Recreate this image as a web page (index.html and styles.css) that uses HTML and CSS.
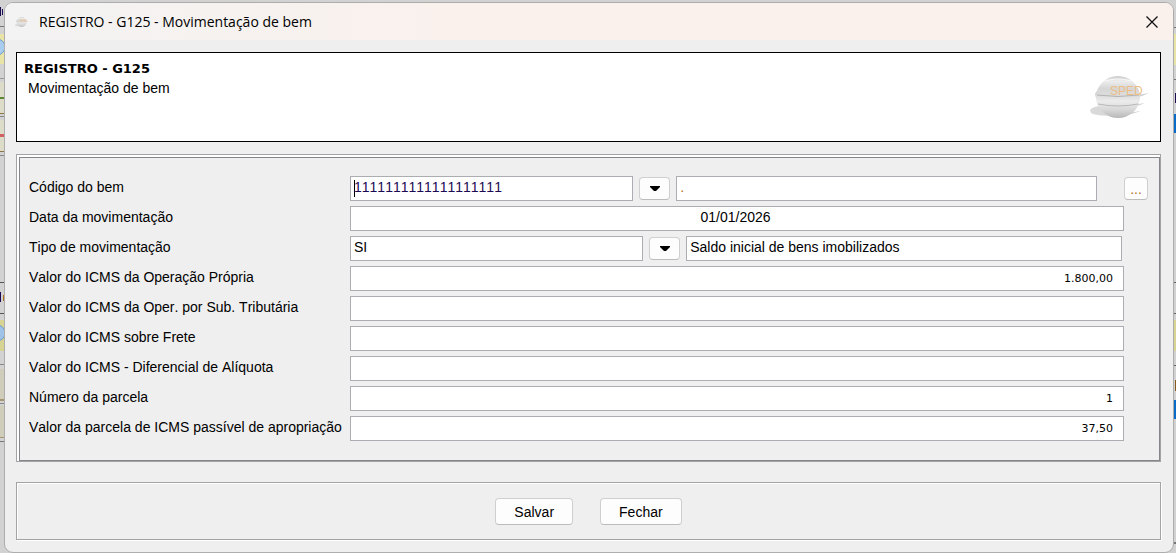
FILE: index.html
```html
<!DOCTYPE html>
<html lang="pt-BR">
<head>
    <meta charset="UTF-8">
    <meta name="viewport" content="width=device-width, initial-scale=1.0">
    <title>REGISTRO - G125 - Movimentação de bem</title>
    <link rel="stylesheet" href="styles.css">
</head>
<body>
    <!-- janela de trás, só aparece nas bordas -->
    <svg class="fundo fundo-esquerdo" width="12" height="553" aria-hidden="true">
        <rect y="26" width="12" height="1" fill="#777"/>
        <rect y="7" width="1" height="9" fill="#1c0b52"/>
        <rect x="2" y="9" width="1" height="6" fill="#1c0b52"/>
        <rect y="34" width="12" height="30" fill="#e8e4a6"/>
        <circle cx="-3" cy="47" r="8" fill="#a9cdf0" stroke="#6f9bc8"/>
        <rect y="78" width="12" height="1" fill="#999"/>
        <rect y="82" width="12" height="31" fill="#dcdcc9"/>
        <rect y="97" width="12" height="2" fill="#5d8734"/>
        <rect y="113" width="12" height="1" fill="#8b7546"/>
        <rect y="116" width="12" height="1" fill="#888"/>
        <rect y="120" width="12" height="31" fill="#dcdcc9"/>
        <rect y="134" width="12" height="3" fill="#d16060"/>
        <rect y="151" width="12" height="1" fill="#8b7546"/>
        <rect y="155" width="12" height="1" fill="#888"/>
        <rect y="282" width="12" height="1" fill="#555"/>
        <rect y="292" width="1" height="10" fill="#1c0b52"/>
        <rect x="3" y="295" width="1" height="6" fill="#b0721c"/>
        <rect y="313" width="12" height="1" fill="#555"/>
        <rect y="320" width="12" height="31" fill="#d6d393"/>
        <circle cx="-3" cy="333" r="8" fill="#9fc3e8" stroke="#6f9bc8"/>
        <rect y="364" width="12" height="1" fill="#888"/>
        <rect y="369" width="12" height="31" fill="#cfccb9"/>
        <rect y="399" width="12" height="2" fill="#a39671"/>
        <rect y="403" width="12" height="1" fill="#888"/>
        <rect y="406" width="12" height="31" fill="#cfccb9"/>
        <rect y="437" width="12" height="1" fill="#a39671"/>
        <rect y="441" width="12" height="1" fill="#777"/>
    </svg>
    <svg class="fundo fundo-direito" width="12" height="553" aria-hidden="true">
        <rect y="27" width="12" height="1" fill="#777"/>
        <rect y="34" width="12" height="31" fill="#e8e4a6"/>
        <rect y="79" width="12" height="1" fill="#777"/>
        <rect x="9" y="97" width="1" height="6" fill="#b0721c"/>
        <rect x="11" y="93" width="1" height="10" fill="#1c0b52"/>
        <rect y="114" width="12" height="19" fill="#0a6ac8"/>
        <rect y="282" width="12" height="1" fill="#666"/>
        <rect y="313" width="12" height="1" fill="#666"/>
        <rect y="320" width="12" height="31" fill="#d6d393"/>
        <rect y="365" width="12" height="1" fill="#666"/>
        <rect x="11" y="380" width="1" height="11" fill="#8a5a1c"/>
        <rect y="400" width="12" height="19" fill="#0a6ac8"/>
        <rect y="542" width="12" height="2" fill="#777"/>
    </svg>

    <div class="janela">
        <header class="barra-titulo">
            <svg class="icone-janela" width="14" height="14" viewBox="0 0 60 48" aria-hidden="true">
                <use href="#sped"/>
            </svg>
            <span class="titulo-janela">REGISTRO - G125 - Movimentação de bem</span>
            <button type="button" class="btn-x" aria-label="Fechar janela">
                <svg width="12" height="12" viewBox="0 0 12 12" aria-hidden="true">
                    <path d="M0.5 0.5L11.5 11.5M11.5 0.5L0.5 11.5" stroke="#111" stroke-width="1.3" fill="none"/>
                </svg>
            </button>
        </header>

        <main class="conteudo">
            <section class="cabecalho">
                <div>
                    <h1>REGISTRO - G125</h1>
                    <p>Movimentação de bem</p>
                </div>
                <svg class="logo" width="60" height="48" viewBox="0 0 60 48" aria-hidden="true">
                    <defs>
                        <linearGradient id="esfera" x1="0" y1="0" x2="0" y2="1">
                            <stop offset="0" stop-color="#c9c9c9"/>
                            <stop offset="0.12" stop-color="#ededed"/>
                            <stop offset="0.3" stop-color="#d6d6d6"/>
                            <stop offset="0.48" stop-color="#dedede"/>
                            <stop offset="0.6" stop-color="#ececec"/>
                            <stop offset="0.8" stop-color="#d8d8d8"/>
                            <stop offset="1" stop-color="#b8b8b8"/>
                        </linearGradient>
                    </defs>
                    <g id="sped">
                        <path d="M0 37Q3 33 12 33L10 29L20 30L24 42Q10 44 1 40Z" fill="#d9d9d9"/>
                        <path d="M5 21Q8 14 17 14L16 28L6 25Z" fill="#cecece"/>
                        <path d="M42 23L59 20L52 23L44 25ZM42 32L55 30L50 32L43 34ZM36 40L51 38L38 42Z" fill="#d0d0d0"/>
                        <ellipse cx="28" cy="24" rx="22" ry="21" fill="url(#esfera)"/>
                        <path d="M15 8Q28 4 41 8" stroke="#f8f8f8" fill="none"/>
                        <path d="M7 22Q28 25 49 22" stroke="#b3b3b3" fill="none"/>
                        <path d="M8 31Q28 35 48 31" stroke="#b9b9b9" fill="none"/>
                        <text class="logo-texto" x="20" y="22">SPED</text>
                    </g>
                </svg>
            </section>

            <form id="form-bem" class="painel">
                <div class="painel-interno">
                    <div class="linha">
                        <label for="codigo">Código do bem</label>
                        <div class="campos campos-codigo">
                            <input type="text" id="codigo" class="com-cursor" value="1111111111111111111">
                            <button type="button" class="btn btn-seta" aria-label="Escolher bem">
                                <svg width="10" height="5" viewBox="0 0 10 5" aria-hidden="true"><path d="M0 0H10V1L6 5H4L0 1Z" fill="#000"/></svg>
                            </button>
                            <input type="text" class="descricao ponto" value="." aria-label="Descrição do bem" readonly>
                        </div>
                        <button type="button" class="btn btn-mais" aria-label="Mais">...</button>
                    </div>
                    <div class="linha">
                        <label for="data">Data da movimentação</label>
                        <div class="campos"><input type="text" id="data" class="centro" value="01/01/2026"></div>
                    </div>
                    <div class="linha">
                        <label for="tipo">Tipo de movimentação</label>
                        <div class="campos campos-tipo">
                            <input type="text" id="tipo" value="SI">
                            <button type="button" class="btn btn-seta" aria-label="Escolher tipo">
                                <svg width="10" height="5" viewBox="0 0 10 5" aria-hidden="true"><path d="M0 0H10V1L6 5H4L0 1Z" fill="#000"/></svg>
                            </button>
                            <input type="text" class="descricao" value="Saldo inicial de bens imobilizados" aria-label="Descrição do tipo" readonly>
                        </div>
                    </div>
                    <div class="linha">
                        <label for="icms-op">Valor do ICMS da Operação Própria</label>
                        <div class="campos"><input type="text" id="icms-op" class="valor" value="1.800,00"></div>
                    </div>
                    <div class="linha">
                        <label for="icms-st">Valor do ICMS da Oper. por Sub. Tributária</label>
                        <div class="campos"><input type="text" id="icms-st" class="valor"></div>
                    </div>
                    <div class="linha">
                        <label for="icms-frete">Valor do ICMS sobre Frete</label>
                        <div class="campos"><input type="text" id="icms-frete" class="valor"></div>
                    </div>
                    <div class="linha">
                        <label for="icms-dif">Valor do ICMS - Diferencial de Alíquota</label>
                        <div class="campos"><input type="text" id="icms-dif" class="valor"></div>
                    </div>
                    <div class="linha">
                        <label for="parcela">Número da parcela</label>
                        <div class="campos"><input type="text" id="parcela" class="valor" value="1"></div>
                    </div>
                    <div class="linha">
                        <label for="valor-parcela">Valor da parcela de ICMS passível de apropriação</label>
                        <div class="campos"><input type="text" id="valor-parcela" class="valor" value="37,50"></div>
                    </div>
                </div>
            </form>

            <footer class="acoes">
                <button type="submit" form="form-bem" class="btn btn-acao">Salvar</button>
                <button type="button" class="btn btn-acao">Fechar</button>
            </footer>
        </main>
    </div>
</body>
</html>
```
FILE: styles.css
```css
* {
    box-sizing: border-box;
}
body {
    margin: 0;
    padding: 2px 2px 0 4px;
    background-color: #d2d2d2;
    font-family: "Liberation Sans", Arial, sans-serif;
    font-size: 14px;
    font-kerning: none;
    color: #000;
    overflow: hidden;
}
.fundo {
    position: absolute;
    top: 0;
}
.fundo-esquerdo {
    left: 0;
}
.fundo-direito {
    right: 0;
}
.janela {
    position: relative;
    background-color: #efefef;
    border: 1px solid #adadad;
    border-radius: 9px;
    overflow: hidden;
}

/* barra de título */
.barra-titulo {
    display: flex;
    align-items: center;
    height: 37px;
    padding: 0 15px 0 10px;
    background: linear-gradient(to right, #f3f3f3, #faf1ec 40%);
}
.titulo-janela {
    flex: 1;
    margin-left: 10px;
    font-family: "Open Sans", "Segoe UI", sans-serif;
    font-size: 14px;
}
.btn-x {
    display: flex;
    padding: 0;
    border: 0;
    background: none;
}

.conteudo {
    padding: 12px 12px 12px 11px;
}
.cabecalho {
    display: flex;
    justify-content: space-between;
    height: 90px;
    padding: 8px 10px 0 7px;
    border: 1px solid #000;
    background-color: #fff;
}
.cabecalho h1 {
    margin: 0;
    font-family: "DejaVu Sans", Verdana, sans-serif;
    font-size: 13px;
    line-height: 16px;
}
.cabecalho p {
    margin: 2px 0 0 4px;
    line-height: 18px;
}
.logo {
    margin-top: 12px;
}
.logo-texto {
    font-size: 12px;
    fill: #edbd83;
}

/* formulário */
.painel {
    margin-top: 12px;
    padding: 2px 0 0 2px;
    border: 1px solid #a3a3a3;
    background-color: #fff;
}
.painel-interno {
    display: flex;
    flex-direction: column;
    gap: 5px;
    padding: 18px 11px 19px 9px;
    border: 1px solid #85858c;
    background-color: #efefef;
}
.linha {
    display: grid;
    grid-template-columns: 321px 1fr 24px;
    align-items: center;
}
.linha label {
    padding-bottom: 3px;
    white-space: nowrap;
}
.campos {
    display: flex;
    align-items: center;
    gap: 6px;
}
.campos input {
    flex: 1;
    width: 0;
    height: 25px;
    padding: 0 3px 3px;
    border: 1px solid #abadb3;
    background-color: #fff;
    font-family: inherit;
    font-size: 14px;
    font-kerning: none;
    color: #000;
    outline: none;
}
.campos-codigo {
    padding-right: 27px;
}
.campos-codigo input {
    flex: 2;
}
.campos-codigo .descricao {
    flex: 3;
}
.campos-tipo {
    padding-right: 2px;
}
.campos-tipo input {
    flex: 2;
}
.campos-tipo .descricao {
    flex: 3;
}
.campos .com-cursor {
    background: linear-gradient(#000, #000) 3px 3px / 1px 17px no-repeat #fff;
    color: #1c0b52;
}
.campos .ponto {
    color: #b0721c;
}
.campos .centro {
    padding-right: 6px;
    text-align: center;
}
.campos .valor {
    padding: 0 10px 0 3px;
    font-family: "DejaVu Sans", Tahoma, sans-serif;
    font-size: 11px;
    text-align: right;
}

/* botões */
.btn {
    border: 1px solid #cfcfcf;
    border-bottom-color: #bcbcbc;
    border-radius: 4px;
    background-color: #fdfdfd;
    font-family: inherit;
    font-size: 14px;
    color: #000;
}
.btn-seta {
    display: flex;
    align-items: center;
    justify-content: center;
    width: 31px;
    height: 23px;
    padding: 0;
}
.btn-mais {
    width: 24px;
    height: 23px;
    padding: 0;
    color: #b0721c;
}
.acoes {
    display: flex;
    justify-content: center;
    gap: 27px;
    margin-top: 20px;
    padding: 15px 0 14px;
    border: 1px solid #a3a3a3;
    box-shadow: 1px 1px 0 #fff, inset 1px 1px 0 #fff;
}
.btn-acao {
    height: 27px;
    padding: 0 18px;
}
```
